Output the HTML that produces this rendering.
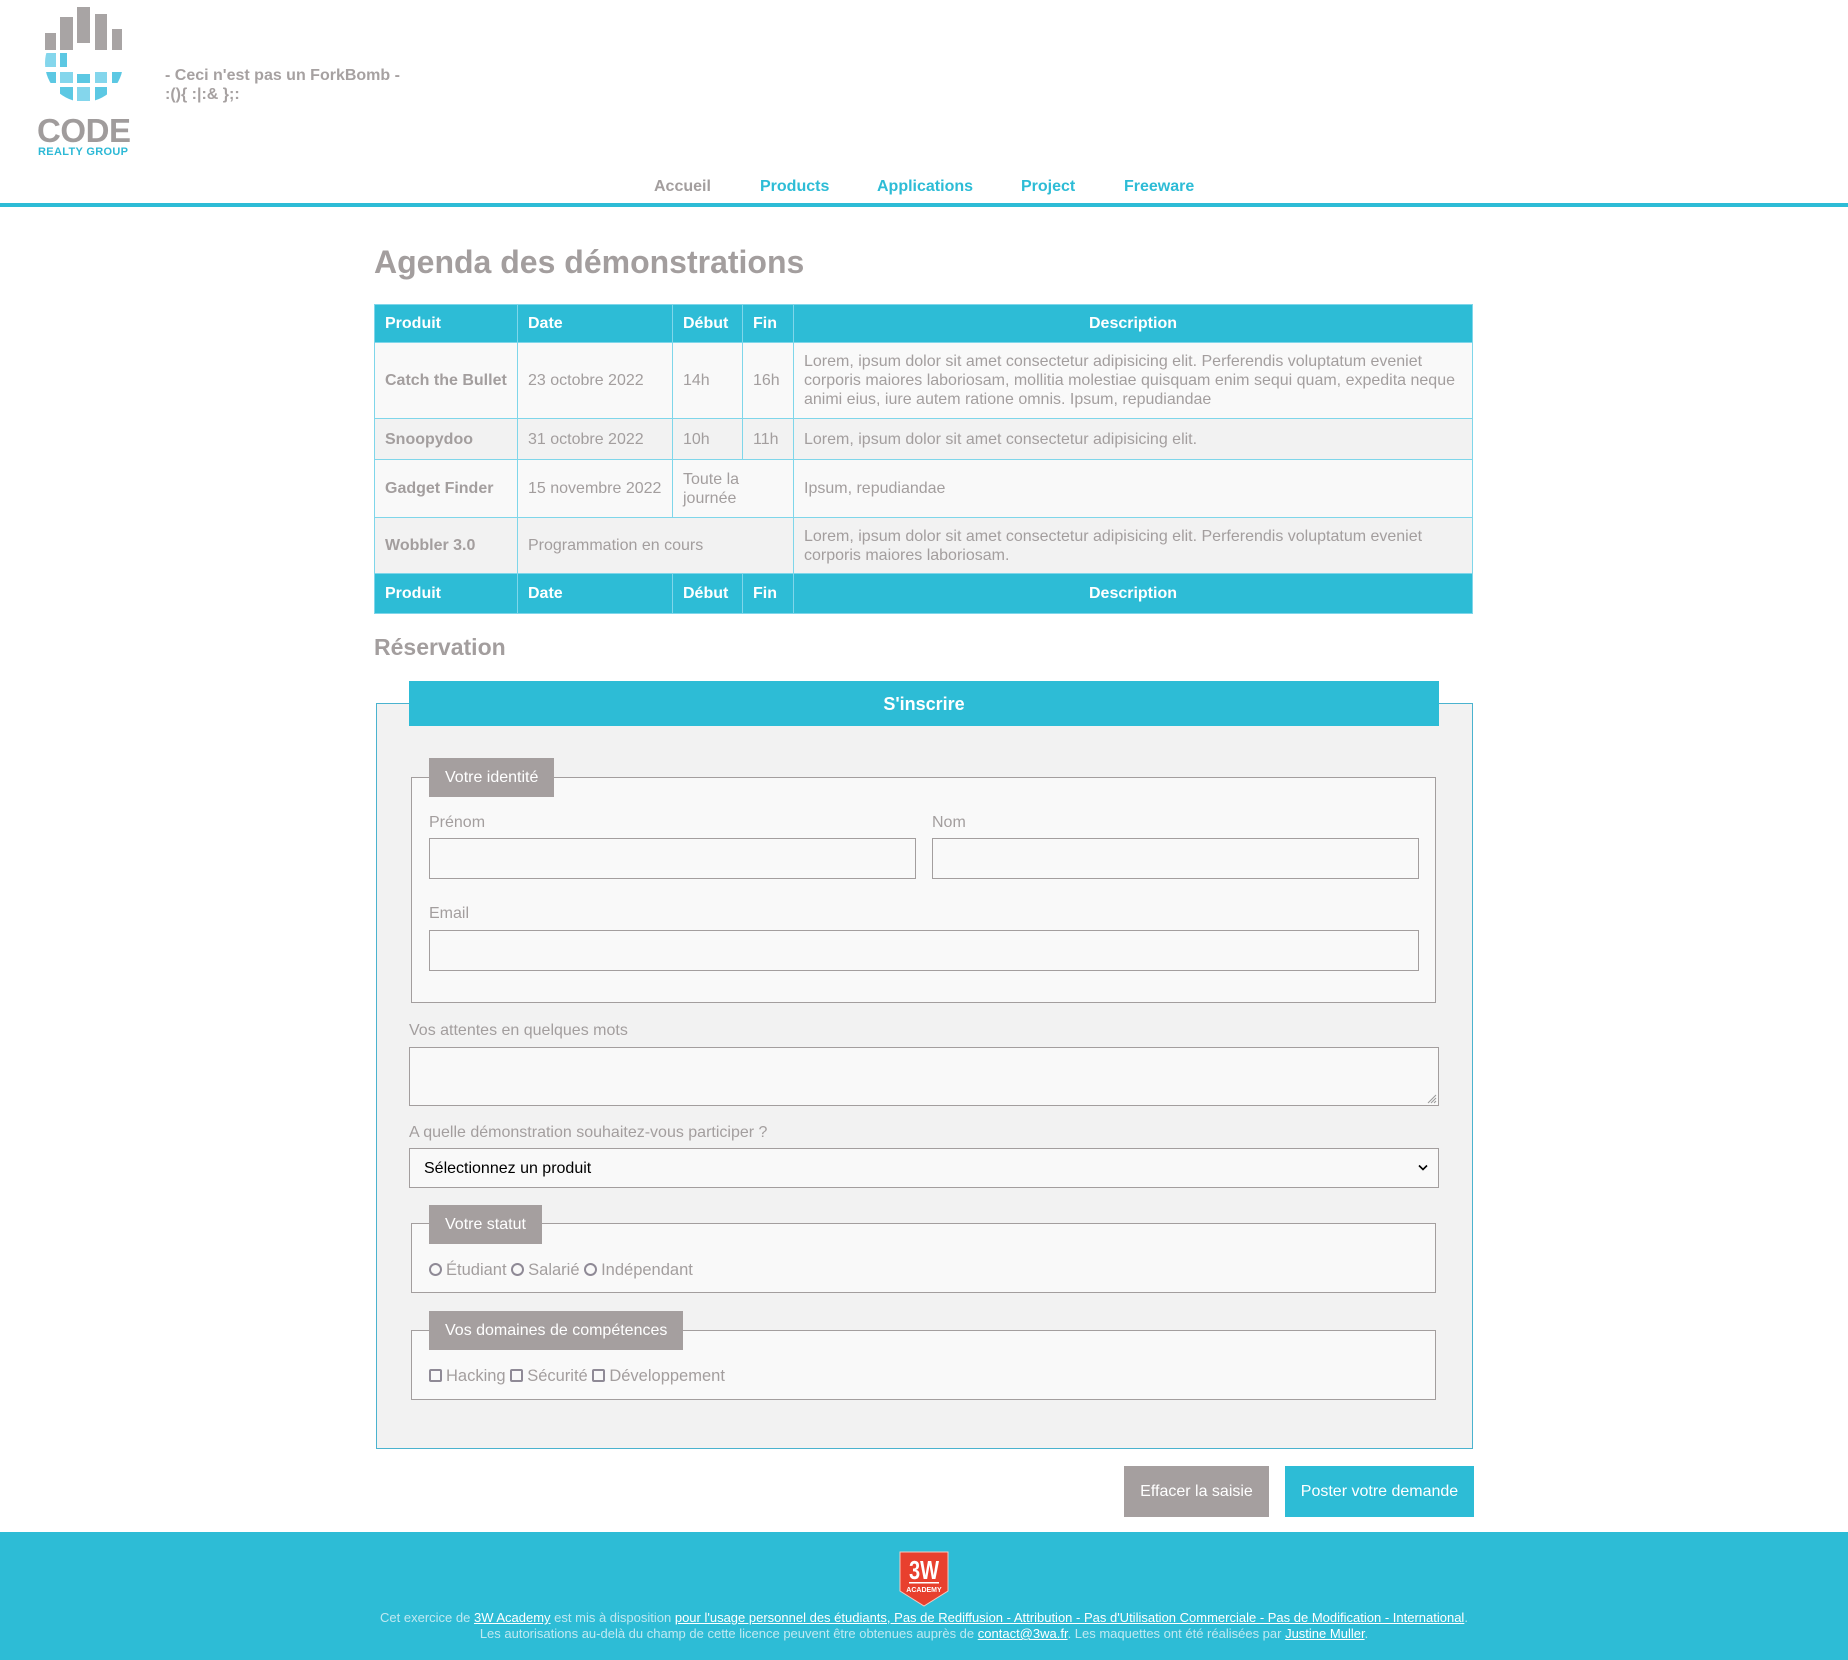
<!DOCTYPE html>
<html><head><meta charset="utf-8"><style>
*{box-sizing:border-box;margin:0;padding:0}
body{width:1848px;height:1660px;position:relative;background:#fff;font-family:"Liberation Sans",Arial,sans-serif;color:#a39e9e;overflow:hidden}
.a{position:absolute}
.nav{top:178px;font-weight:bold;font-size:16px;color:#2dbcd6;white-space:nowrap}
table{position:absolute;left:374px;top:304px;width:1099px;border-collapse:collapse;table-layout:fixed;font-size:16px}
td,th{border:1px solid #7fd6ea;padding:0 10px;text-align:left;line-height:19px;vertical-align:middle}
th{background:#2dbcd6;color:#fff;font-weight:bold}
tr.o td{background:#f9f9f9}tr.e td{background:#f2f2f2}
td.b{font-weight:bold}
.lbl{font-size:16px;color:#a39e9e}
.inp{position:absolute;background:#f9f9f9;border:1px solid #a39e9e}
.fs{position:absolute;background:#f9f9f9;border:1px solid #a39e9e}
.lg{position:absolute;background:#a59f9f;color:#fff;font-size:16px;line-height:39px;padding-left:16px}
.btn{position:absolute;top:1466px;height:51px;line-height:51px;color:#fff;font-size:16px;text-align:center}
.rad{display:inline-block;width:13px;height:13px;border:2px solid #8f8a96;border-radius:50%;vertical-align:-1px;margin-right:4px}
.chk{display:inline-block;width:13px;height:13px;border:2px solid #8f8a96;border-radius:2px;vertical-align:-1px;margin-right:4px}
.ft{left:0;width:1848px;text-align:center;font-size:13px;color:#bfe8f1;letter-spacing:0}
.ft u{color:#fff}
</style></head><body>
<svg class="a" style="left:0;top:0" width="160" height="160" viewBox="0 0 160 160">
<g fill="#a8a4a4"><rect x="45" y="33" width="11" height="17"/><rect x="60" y="17" width="13" height="33"/><rect x="77" y="7" width="13" height="36"/><rect x="95" y="14" width="12" height="36"/><rect x="112" y="29" width="10" height="21"/></g>
<defs><clipPath id="c"><circle cx="84" cy="63" r="39"/></clipPath></defs>
<g clip-path="url(#c)"><g fill="#5cc8e3"><rect x="45" y="53" width="11" height="14" fill="#84d6ec"/><rect x="60" y="53" width="7" height="14"/><rect x="46" y="72" width="10" height="11"/><rect x="60" y="72" width="13" height="11" fill="#84d6ec"/><rect x="77" y="74" width="13" height="9"/><rect x="95" y="72" width="12" height="11" fill="#84d6ec"/><rect x="112" y="72" width="10" height="11"/><rect x="60" y="87" width="13" height="14"/><rect x="77" y="87" width="13" height="14" fill="#84d6ec"/><rect x="95" y="87" width="12" height="14"/></g></g>
<text x="37" y="142" font-family="Liberation Sans" font-weight="bold" font-size="33" fill="#a09c9c" textLength="94">CODE</text>
<text x="38" y="155" font-family="Liberation Sans" font-weight="bold" font-size="11" fill="#2db9d6" textLength="90">REALTY GROUP</text>
</svg>
<div class="a" style="left:165px;top:66px;font-size:16px;font-weight:bold;line-height:19px;color:#a6a1a1">- Ceci n'est pas un ForkBomb -<br>:(){ :|:&amp; };:</div>
<div class="a nav" style="left:654px;color:#a39e9e">Accueil</div>
<div class="a nav" style="left:760px">Products</div>
<div class="a nav" style="left:877px">Applications</div>
<div class="a nav" style="left:1021px">Project</div>
<div class="a nav" style="left:1124px">Freeware</div>
<div class="a" style="left:0;top:203px;width:1848px;height:4px;background:#2dbcd6"></div>
<div class="a" style="left:374px;top:244px;font-size:32px;font-weight:bold;color:#a39e9e">Agenda des démonstrations</div>
<table>
<colgroup><col style="width:143px"><col style="width:155px"><col style="width:70px"><col style="width:51px"><col></colgroup>
<tr style="height:38px"><th>Produit</th><th>Date</th><th>Début</th><th>Fin</th><th style="text-align:center">Description</th></tr>
<tr class="o" style="height:76px"><td class="b">Catch the Bullet</td><td>23 octobre 2022</td><td>14h</td><td>16h</td><td>Lorem, ipsum dolor sit amet consectetur adipisicing elit. Perferendis voluptatum eveniet corporis maiores laboriosam, mollitia molestiae quisquam enim sequi quam, expedita neque animi eius, iure autem ratione omnis. Ipsum, repudiandae</td></tr>
<tr class="e" style="height:41px"><td class="b">Snoopydoo</td><td>31 octobre 2022</td><td>10h</td><td>11h</td><td>Lorem, ipsum dolor sit amet consectetur adipisicing elit.</td></tr>
<tr class="o" style="height:58px"><td class="b">Gadget Finder</td><td>15 novembre 2022</td><td colspan="2">Toute la journée</td><td>Ipsum, repudiandae</td></tr>
<tr class="e" style="height:56px"><td class="b">Wobbler 3.0</td><td colspan="3">Programmation en cours</td><td>Lorem, ipsum dolor sit amet consectetur adipisicing elit. Perferendis voluptatum eveniet corporis maiores laboriosam.</td></tr>
<tr style="height:40px"><th>Produit</th><th>Date</th><th>Début</th><th>Fin</th><th style="text-align:center">Description</th></tr>
</table>
<div class="a" style="left:374px;top:634px;font-size:23px;font-weight:bold">Réservation</div>
<div class="a" style="left:376px;top:703px;width:1097px;height:746px;background:#f2f2f2;border:1px solid #4ab3cf"></div>
<div class="a" style="left:409px;top:681px;width:1030px;height:45px;background:#2dbcd6;color:#fff;font-weight:bold;font-size:18px;line-height:46px;text-align:center">S'inscrire</div>
<div class="fs" style="left:411px;top:777px;width:1025px;height:226px"></div>
<div class="lg" style="left:429px;top:758px;width:125px">Votre identité</div>
<div class="a lbl" style="left:429px;top:814px">Prénom</div>
<div class="a lbl" style="left:932px;top:814px">Nom</div>
<div class="inp" style="left:429px;top:838px;width:487px;height:41px"></div>
<div class="inp" style="left:932px;top:838px;width:487px;height:41px"></div>
<div class="a lbl" style="left:429px;top:905px">Email</div>
<div class="inp" style="left:429px;top:930px;width:990px;height:41px"></div>
<div class="a lbl" style="left:409px;top:1022px">Vos attentes en quelques mots</div>
<div class="inp" style="left:409px;top:1047px;width:1030px;height:59px"><svg class="a" style="right:1px;bottom:1px" width="10" height="10"><path d="M9 1L1 9M9 4L4 9M9 7L7 9" stroke="#999" stroke-width="1"/></svg></div>
<div class="a lbl" style="left:409px;top:1124px">A quelle démonstration souhaitez-vous participer ?</div>
<div class="inp" style="left:409px;top:1148px;width:1030px;height:40px;color:#000;font-size:16px;line-height:39px;padding-left:14px">Sélectionnez un produit<svg class="a" style="right:10px;top:15px" width="10" height="8"><path d="M1 1.5L5 5.5L9 1.5" stroke="#000" stroke-width="1.6" fill="none"/></svg></div>
<div class="fs" style="left:411px;top:1223px;width:1025px;height:70px"></div>
<div class="lg" style="left:429px;top:1205px;width:113px">Votre statut</div>
<div class="a lbl" style="left:429px;top:1261px;font-size:16.5px"><span class="rad"></span>Étudiant <span class="rad"></span>Salarié <span class="rad"></span>Indépendant</div>
<div class="fs" style="left:411px;top:1330px;width:1025px;height:70px"></div>
<div class="lg" style="left:429px;top:1311px;width:254px">Vos domaines de compétences</div>
<div class="a lbl" style="left:429px;top:1367px;font-size:16.5px"><span class="chk"></span>Hacking <span class="chk"></span>Sécurité <span class="chk"></span>Développement</div>
<div class="btn" style="left:1124px;width:145px;background:#a59f9f">Effacer la saisie</div>
<div class="btn" style="left:1285px;width:189px;background:#2dbcd6">Poster votre demande</div>
<div class="a" style="left:0;top:1532px;width:1848px;height:128px;background:#2dbcd6"></div>
<svg class="a" style="left:899px;top:1551px" width="50" height="56" viewBox="0 0 50 56"><path d="M1 1H49V40L25 55L1 40Z" fill="#e8402e" stroke="#f6c9bf" stroke-width="1"/><text x="25" y="28" text-anchor="middle" font-family="Liberation Sans" font-weight="bold" font-size="26" fill="#fff" textLength="30" lengthAdjust="spacingAndGlyphs">3W</text><rect x="10" y="31" width="30" height="1.5" fill="#fff"/><text x="25" y="41" text-anchor="middle" font-family="Liberation Sans" font-weight="bold" font-size="7" fill="#fff">ACADEMY</text></svg>
<div class="a ft" style="top:1610px">Cet exercice de <u>3W Academy</u> est mis à disposition <u>pour l'usage personnel des étudiants, Pas de Rediffusion - Attribution - Pas d'Utilisation Commerciale - Pas de Modification - International</u>.</div>
<div class="a ft" style="top:1626px">Les autorisations au-delà du champ de cette licence peuvent être obtenues auprès de <u>contact@3wa.fr</u>. Les maquettes ont été réalisées par <u>Justine Muller</u>.</div>
</body></html>
